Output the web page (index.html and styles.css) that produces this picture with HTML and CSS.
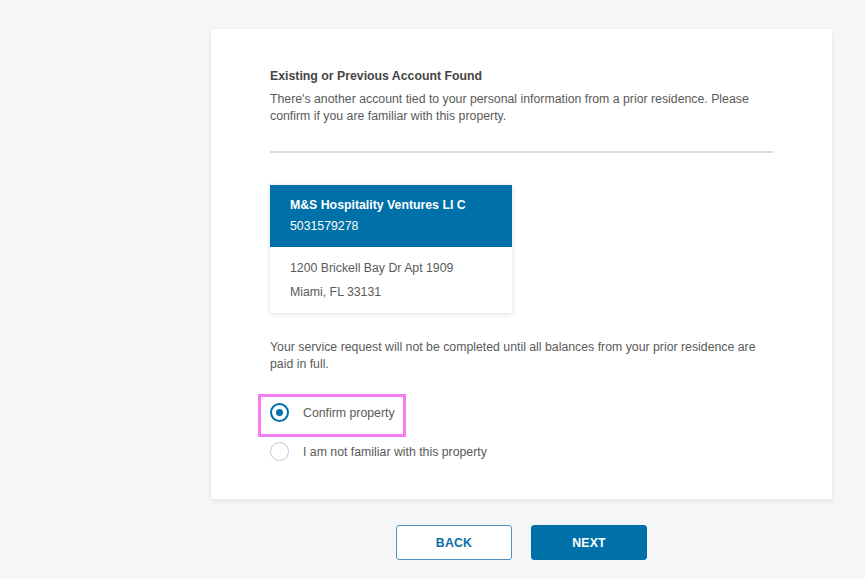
FILE: index.html
```html
<!DOCTYPE html>
<html lang="en">
<head>
<meta charset="utf-8">
<title>Existing or Previous Account Found</title>
<link rel="stylesheet" href="styles.css">
</head>
<body>
<div class="page">
  <section class="panel">
    <h2 class="title">Existing or Previous Account Found</h2>
    <p class="text">There's another account tied to your personal information from a prior residence. Please confirm if you are familiar with this property.</p>
    <hr class="divider">
    <div class="property">
      <div class="property-head">
        <div class="property-name">M&amp;S Hospitality Ventures LI C</div>
        <div class="property-num">5031579278</div>
      </div>
      <div class="property-body">
        <div>1200 Brickell Bay Dr Apt 1909</div>
        <div>Miami, FL 33131</div>
      </div>
    </div>
    <p class="text notice">Your service request will not be completed until all balances from your prior residence are paid in full.</p>
    <div class="options">
      <label class="option highlighted">
        <span class="radio checked"></span>
        <span class="option-label">Confirm property</span>
        <span class="highlight"></span>
      </label>
      <label class="option">
        <span class="radio"></span>
        <span class="option-label">I am not familiar with this property</span>
      </label>
    </div>
  </section>
  <div class="actions">
    <button class="btn btn-outline">BACK</button>
    <button class="btn btn-solid">NEXT</button>
  </div>
</div>
</body>
</html>
```

FILE: styles.css
```css
html, body {
  margin: 0;
  padding: 0;
}
body {
  background: #f5f6f8;
  font-family: "Liberation Sans", Arial, sans-serif;
  color: #5a5a5a;
  font-size: 12.3px;
}
.page {
  width: 621px;
  margin-left: 211px;
  padding-top: 29px;
}
.panel {
  box-sizing: border-box;
  background: #fff;
  height: 470px;
  padding: 38px 59px 0 59px;
  box-shadow: 0 2px 5px rgba(0, 0, 0, 0.08);
}
.title {
  margin: 0;
  font-size: 12.3px;
  line-height: 17px;
  font-weight: bold;
  color: #454545;
  padding-top: 1px;
}
.text {
  margin: 6px 0 0 0;
  line-height: 17px;
  color: #5a5a5a;
}
.divider {
  margin: 26px 0 0 0;
  border: 0;
  height: 2px;
  background: #dcdcdc;
}
.property {
  margin-top: 32px;
  width: 242px;
  background: #fff;
  box-shadow: 0 1px 5px rgba(0, 0, 0, 0.13);
}
.property-head {
  background: #0070a8;
  color: #fff;
  padding: 10px 20px 10px 20px;
  line-height: 21px;
}
.property-name {
  font-weight: bold;
}
.property-body {
  padding: 9px 20px 9px 20px;
  line-height: 24px;
  color: #5a5a5a;
}
.notice {
  margin-top: 26px;
}
.options {
  margin-top: 20px;
  display: flex;
  flex-direction: column;
}
.option {
  position: relative;
  display: flex;
  align-items: center;
  height: 39px;
}
.radio {
  box-sizing: border-box;
  width: 19px;
  height: 19px;
  border-radius: 50%;
  border: 1.5px solid #c8c8c8;
  background: #fff;
  display: flex;
  align-items: center;
  justify-content: center;
  flex: none;
}
.radio.checked {
  border: 2px solid #0070a8;
}
.radio.checked::after {
  content: "";
  width: 7px;
  height: 7px;
  border-radius: 50%;
  background: #0070a8;
}
.option-label {
  margin-left: 14px;
  color: #5a5a5a;
}
.highlight {
  position: absolute;
  left: -12px;
  top: 1px;
  width: 148px;
  height: 43px;
  box-sizing: border-box;
  border: 3px solid #f57cf3;
  pointer-events: none;
}
.actions {
  display: flex;
  justify-content: center;
  gap: 19px;
  margin-top: 26px;
}
.btn {
  box-sizing: border-box;
  width: 116px;
  height: 35px;
  border-radius: 3px;
  font-family: "Liberation Sans", Arial, sans-serif;
  font-size: 12.3px;
  font-weight: bold;
  letter-spacing: 0.2px;
  cursor: pointer;
}
.btn-outline {
  background: #fff;
  color: #0a6fa5;
  border: 1px solid #4d93bf;
}
.btn-solid {
  background: #0070a8;
  color: #fff;
  border: 1px solid #0070a8;
}
```
